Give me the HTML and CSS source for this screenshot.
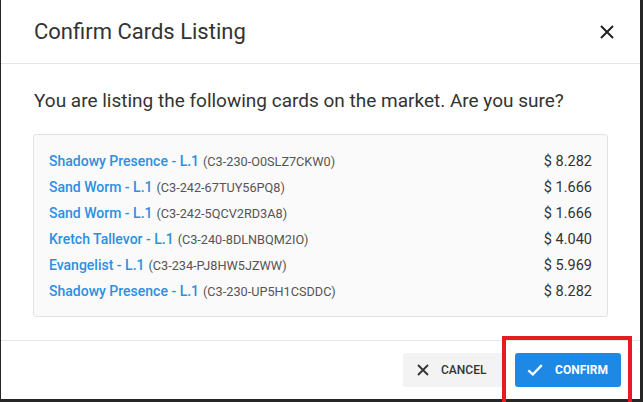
FILE: index.html
```html
<!DOCTYPE html>
<html lang="en">
<head>
    <meta charset="UTF-8">
    <meta name="viewport" content="width=device-width, initial-scale=1.0">
    <title>Confirm Cards Listing</title>
    <link rel="stylesheet" href="styles.css">
</head>
<body>
    <div class="modal">
        <div class="modal-header">
            <h2>Confirm Cards Listing</h2>
            <button class="close-btn" aria-label="Close">
                <svg width="14" height="14" viewBox="0 0 14 14"><path d="M1 1L13 13M13 1L1 13" stroke="#222" stroke-width="2" fill="none"/></svg>
            </button>
        </div>
        <div class="modal-body">
            <p class="intro">You are listing the following cards on the market. Are you sure?</p>
            <div class="card-list">
                <div class="card-row">
                    <span><a href="#">Shadowy Presence - L.1</a> <span class="code">(C3-230-O0SLZ7CKW0)</span></span>
                    <span class="price">$ 8.282</span>
                </div>
                <div class="card-row">
                    <span><a href="#">Sand Worm - L.1</a> <span class="code">(C3-242-67TUY56PQ8)</span></span>
                    <span class="price">$ 1.666</span>
                </div>
                <div class="card-row">
                    <span><a href="#">Sand Worm - L.1</a> <span class="code">(C3-242-5QCV2RD3A8)</span></span>
                    <span class="price">$ 1.666</span>
                </div>
                <div class="card-row">
                    <span><a href="#">Kretch Tallevor - L.1</a> <span class="code">(C3-240-8DLNBQM2IO)</span></span>
                    <span class="price">$ 4.040</span>
                </div>
                <div class="card-row">
                    <span><a href="#">Evangelist - L.1</a> <span class="code">(C3-234-PJ8HW5JZWW)</span></span>
                    <span class="price">$ 5.969</span>
                </div>
                <div class="card-row">
                    <span><a href="#">Shadowy Presence - L.1</a> <span class="code">(C3-230-UP5H1CSDDC)</span></span>
                    <span class="price">$ 8.282</span>
                </div>
            </div>
        </div>
        <div class="modal-footer">
            <button class="btn btn-cancel">
                <svg width="12" height="12" viewBox="0 0 12 12"><path d="M1 1L11 11M11 1L1 11" stroke="#333" stroke-width="1.8" fill="none"/></svg>
                CANCEL
            </button>
            <button class="btn btn-confirm">
                <svg width="18" height="14" viewBox="0 0 18 14"><path d="M1.5 7.5L6.5 12L16.5 1.5" stroke="#fff" stroke-width="2.6" fill="none"/></svg>
                CONFIRM
            </button>
        </div>
        <div class="highlight"></div>
    </div>
</body>
</html>
```

FILE: styles.css
```css
body {
    margin: 0;
    background: #262626;
    font-family: Roboto, "Liberation Sans", Arial, sans-serif;
    height: 402px;
    overflow: hidden;
}
.modal {
    position: relative;
    width: 639px;
    height: 399px;
    margin-left: 1px;
    background: #fff;
    display: flex;
    flex-direction: column;
}
.modal-header {
    height: 63px;
    border-bottom: 1px solid #e6e6e6;
    display: flex;
    align-items: center;
    justify-content: space-between;
    padding: 0 26px 0 33px;
}
.modal-header h2 {
    margin: 0;
    font-size: 22px;
    font-weight: 400;
    color: #333;
}
.close-btn {
    background: none;
    border: none;
    padding: 0;
    display: flex;
    cursor: pointer;
}
.modal-body {
    flex: 1;
    padding: 0 32px 0 32px;
}
.intro {
    margin: 26px 0 22px 1px;
    font-size: 19px;
    line-height: 22px;
    color: #333;
}
.card-list {
    background: #fafafa;
    border: 1px solid #e2e2e2;
    border-radius: 3px;
    padding: 13px 15px 12px 15px;
}
.card-row {
    display: flex;
    justify-content: space-between;
    align-items: baseline;
    height: 26px;
    line-height: 26px;
}
.card-row a {
    color: #2d8fe0;
    font-weight: 500;
    font-size: 14px;
    text-decoration: none;
}
.code {
    font-size: 12.7px;
    color: #555;
}
.price {
    font-size: 14.5px;
    font-weight: 400;
    color: #333;
}
.modal-footer {
    height: 58px;
    border-top: 1px solid #e6e6e6;
    display: flex;
    align-items: center;
    justify-content: flex-end;
    gap: 12px;
    padding: 0 19px;
}
.btn {
    height: 34px;
    border: none;
    border-radius: 3px;
    font-family: inherit;
    font-size: 12px;
    font-weight: 500;
    display: flex;
    align-items: center;
    gap: 12px;
    cursor: pointer;
}
.btn-cancel {
    background: #f3f3f3;
    color: #333;
    padding: 0 13px 0 14px;
    width: 100px;
}
.btn-confirm {
    background: #1e88e5;
    color: #fff;
    font-weight: 700;
    padding: 0 13px 0 12px;
    width: 106px;
}
.highlight {
    position: absolute;
    left: 501px;
    top: 336px;
    width: 122px;
    height: 66px;
    border: 4px solid #e51c23;
}
```
